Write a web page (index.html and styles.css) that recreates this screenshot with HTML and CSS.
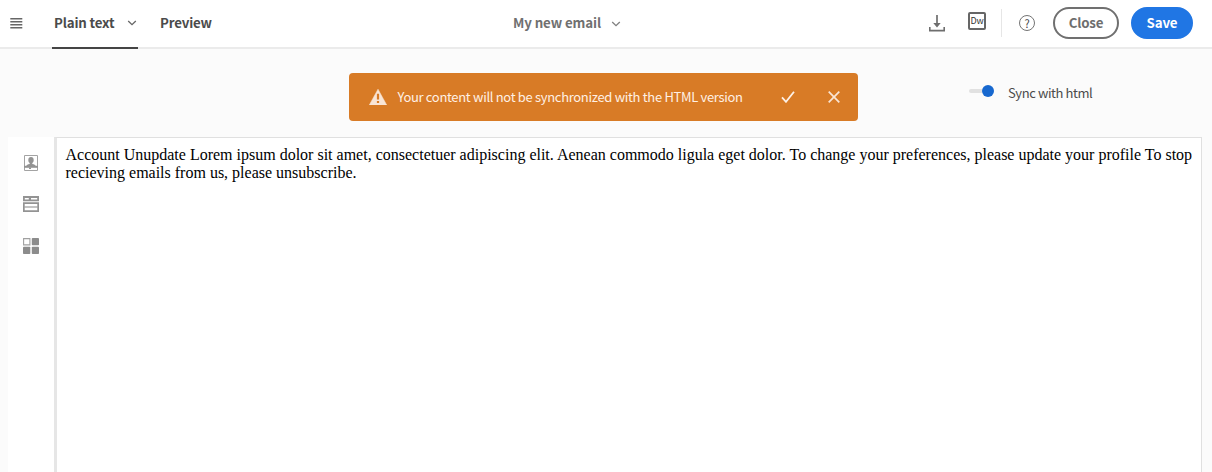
FILE: index.html
```html
<!DOCTYPE html>
<html lang="en">
<head>
<meta charset="utf-8">
<title>My new email</title>
<link rel="stylesheet" href="styles.css">
</head>
<body>
<header class="topbar">
  <nav class="tabs">
    <svg class="menu-icon" width="13" height="12" viewBox="0 0 13 12"><path d="M.3 .8h12M.3 3.800h12M.3 6.800h12M.3 9.800h12" stroke="#666" stroke-width="1.600"/></svg>
    <a class="tab tab-active"><span class="tab-label">Plain text</span><svg width="10" height="6" viewBox="0 0 10 6"><path d="M1.200 1l3.800 3.700L8.800 1" fill="none" stroke="#666" stroke-width="1.300"/></svg></a>
    <a class="tab">Preview</a>
  </nav>
  <div class="doc-title"><span>My new email</span><svg width="10" height="6" viewBox="0 0 10 6"><path d="M1.200 1l3.800 3.700L8.800 1" fill="none" stroke="#808080" stroke-width="1.300"/></svg></div>
  <div class="actions">
    <svg class="download-icon" width="16" height="17" viewBox="0 0 16 17"><path d="M8 0v10" stroke="#6e6e6e" stroke-width="1.700"/><path d="M4.300 8h7.400L8 12.600z" fill="#6e6e6e"/><path d="M.8 12v3.600h14.400V12" fill="none" stroke="#6e6e6e" stroke-width="1.600"/></svg>
    <span class="dw-icon">Dw</span>
    <span class="divider"></span>
    <span class="help-icon">?</span>
    <button class="btn btn-close">Close</button>
    <button class="btn btn-save">Save</button>
  </div>
</header>
<section class="notice-row">
  <div class="notice">
    <svg class="warning-icon" width="18" height="16" viewBox="0 0 18 16"><path d="M9 .2L17.700 16H.3z" fill="#f9e5d5" stroke="#f9e5d5" stroke-width=".5" stroke-linejoin="round"/><path d="M7.900 4.800h2.200v5.800H7.900zM7.900 12h2.200v2.100H7.900z" fill="#d87b26"/></svg>
    <span class="notice-text">Your content will not be synchronized with the HTML version</span>
    <svg class="check-icon" width="14" height="12" viewBox="0 0 14 12"><path d="M1 6.400l4 4.400L13 .8" fill="none" stroke="#fdf1e7" stroke-width="1.800"/></svg>
    <svg class="cross-icon" width="12" height="12" viewBox="0 0 12 12"><path d="M.7 .7l10.600 10.600M11.300 .7L.7 11.300" stroke="#f9e5d5" stroke-width="1.700"/></svg>
  </div>
  <div class="sync"><span class="switch"><span class="track"></span><span class="knob"></span></span><span class="sync-label">Sync with html</span></div>
</section>
<main class="workspace">
  <aside class="rail">
    <svg width="16" height="16" viewBox="0 0 16 16"><path d="M1.500.5h13v15h-13z" fill="#fff" stroke="#a3a3a3"/><path d="M8 2c1.800 0 2.700 1.200 2.700 3 0 1.500-.6 2.500-1.400 3.100v.9c1.800.5 3.400.8 3.600 2.600H3.100C3.300 9.800 4.900 9.500 6.700 9v-.9C5.900 7.500 5.300 6.500 5.300 5c0-1.800.9-3 2.700-3z" fill="#939393"/><path d="M1 10.800h14v2H1z" fill="#939393"/><path d="M6 12.500h2v1.500H6z" fill="#939393"/></svg>
    <svg width="16" height="16" viewBox="0 0 16 16"><path d="M0 0h16v5.200H0zM0 6.200h16V16H0z" fill="#939393"/><path d="M1.800 1.900h4v1.500h-4zM8 1.900h6.200v1.500H8zM1.700 8h12.600v2.500H1.700zM1.700 11.500h12.600v2.700H1.700z" fill="#fff"/><path d="M1.700 10.500h12.600v1H1.700z" fill="#bcbcbc"/></svg>
    <svg class="rail-last" width="16" height="16" viewBox="0 0 16 16"><path d="M.6.6h6.300v6.300H.6z" fill="#fff" stroke="#a0a0a0" stroke-width="1.100"/><rect x="8.800" width="7.200" height="7.300" rx=".8" fill="#8c8c8c"/><rect y="8.700" width="7.300" height="7.300" rx=".8" fill="#8c8c8c"/><rect x="8.800" y="8.700" width="7.200" height="7.300" rx=".8" fill="#8c8c8c"/></svg>
  </aside>
  <article class="editor"><span class="line">Account Unupdate Lorem ipsum dolor sit amet, consectetuer adipiscing elit. Aenean commodo ligula eget dolor. To change your preferences, please update your profile To stop</span> <span class="line">recieving emails from us, please unsubscribe.</span></article>
</main>
</body>
</html>
```
FILE: styles.css
```css
* { box-sizing: border-box; }
html, body { margin: 0; height: 100%; overflow: hidden; }
body {
  display: flex;
  flex-direction: column;
  background: #fbfbfb;
  color: #4b4b4b;
  font-family: "Noto Sans CJK SC", "Open Sans", sans-serif;
  font-size: 13.3px;
  line-height: 20px;
}
svg { display: block; flex: none; }
.topbar {
  display: grid;
  grid-template-columns: 513px 1fr auto;
  height: 49px;
  flex: none;
  background: #fff;
  border-bottom: 2px solid #ebebeb;
  font-weight: 700;
  letter-spacing: -0.16px;
}
.tabs { display: flex; padding-left: 10px; height: 49px; }
.menu-icon { margin: 18px 29px 0 0; }
.tab { height: 49px; padding-top: 13px; white-space: nowrap; }
.tab-active { display: flex; width: 86px; margin-right: 22px; padding-left: 2px; border-bottom: 2px solid #454545; }
.tab-label { width: 73px; }
.tab-active svg { margin-top: 7px; }
.doc-title { display: flex; padding-top: 13px; color: #707070; white-space: nowrap; }
.doc-title span { width: 97.5px; letter-spacing: -0.1px; }
.doc-title svg { margin-top: 8px; }
.actions { display: flex; padding-right: 19px; }
.download-icon { margin: 15px 23px 0 0; }
.dw-icon {
  width: 18px; height: 18px; margin: 12px 15px 0 0;
  border: 2px solid #666; border-radius: 2px;
  font-size: 9px; line-height: 14px; letter-spacing: -0.2px; font-weight: 400;
  display: flex; justify-content: center; color: #333;
}
.divider { width: 1px; height: 28px; margin: 9px 17px 0 0; background: #e6e6e6; }
.help-icon {
  width: 16px; height: 16px; margin: 15px 18px 0 0;
  border: 1px solid #747474; border-radius: 50%;
  font-size: 11px; line-height: 14px; text-align: center; font-weight: 400; color: #444;
}
.btn {
  height: 32px; margin-top: 7px; padding: 0;
  border-radius: 16px; font: inherit; line-height: 28px; letter-spacing: inherit;
}
.btn-close { width: 66px; margin-right: 12px; border: 2px solid #707070; background: #fff; color: #6e6e6e; }
.btn-save { width: 62px; border: 2px solid #2076e4; background: #2076e4; color: #fff; }
.notice-row { display: flex; height: 88px; flex: none; padding: 24px 0 0 349.4px; }
.notice {
  display: flex; align-items: center; flex: none;
  width: 509px; height: 48px; padding-left: 20px;
  border-radius: 4px; background: #d87b26; color: #fff0e4;
}
.notice-text { width: 384px; margin-left: 10px; white-space: nowrap; font-size: 13px; letter-spacing: -0.32px; }
.cross-icon { margin-left: 33px; }
.sync { display: flex; margin-left: 110.6px; }
.switch { display: flex; align-items: center; width: 25px; height: 12px; margin: 12px 14px 0 0; }
.track { width: 13px; height: 4px; background: #e1e1e1; border-radius: 2px 0 0 2px; }
.knob { width: 12px; height: 12px; border-radius: 50%; background: #1768cf; }
.sync-label { padding-top: 10px; white-space: nowrap; font-size: 13px; letter-spacing: -0.42px; }
.workspace { display: flex; flex: 1; padding: 0 10.500px 0 8px; }
.rail {
  display: flex; flex-direction: column; align-items: center; gap: 25px;
  width: 46px; padding-top: 18px; background: #fff;
}
.rail-last { margin-top: 1px; }
.editor {
  flex: 1; padding: 8px 0 0 8.500px;
  border: solid #e0e0e0; border-width: 1px 1px 0 3px; border-left-color: #e6e6e6;
  background: #fff; color: #000;
  font: 16px/18px "Liberation Serif", serif;
}
.line { display: block; white-space: nowrap; }
```
